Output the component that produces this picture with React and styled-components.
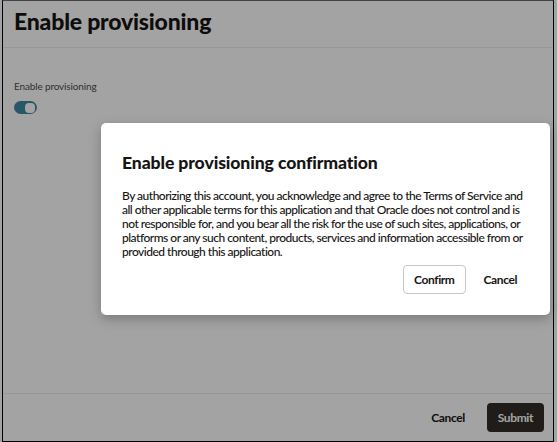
import styled, { createGlobalStyle } from 'styled-components';

const GlobalStyle = createGlobalStyle`
  html, body {
    margin: 0;
    padding: 0;
    background: #ffffff;
  }
  body {
    font-family: Lato, "Noto Sans", sans-serif;
    color: #161513;
  }
`;

const Page = styled.div`
  width: 557px;
  height: 442px;
  position: relative;
  overflow: hidden;
  background: #ffffff;
`;

const Frame = styled.div`
  margin-left: 2px;
  width: 550px;
  height: 440px;
  border: 1px solid #000000;
  border-top-color: #6a6a6a;
  display: flex;
  flex-direction: column;
`;

const Header = styled.header`
  height: 46px;
  border-bottom: 1px solid #ececec;
  padding: 0 11px;
  display: flex;
  align-items: center;
`;

const Title = styled.h1`
  margin: -6px 0 0;
  font-size: 23px;
  font-weight: 900;
  letter-spacing: -0.2px;
  color: #161513;
`;

const Content = styled.main`
  flex: 1;
  padding: 32px 11px 0;
`;

const FieldLabel = styled.label`
  display: block;
  font-size: 10px;
  letter-spacing: -0.15px;
  color: #4f4d4b;
  margin-bottom: 9px;
`;

const Toggle = styled.span`
  display: flex;
  justify-content: flex-end;
  align-items: center;
  width: 23px;
  height: 13px;
  box-sizing: border-box;
  padding: 0 2px;
  border-radius: 7px;
  background: ${(p) => (p.on ? '#3d8aa3' : '#bbbbbb')};
`;

const Knob = styled.span`
  width: 10px;
  height: 10px;
  border-radius: 4px;
  background: #ffffff;
`;

const Footer = styled.footer`
  height: 47px;
  border-top: 1px solid #ececec;
  display: flex;
  justify-content: flex-end;
  align-items: center;
  gap: 10px;
  padding: 0 9px 0 0;
`;

const Button = styled.button`
  font-family: Lato, "Noto Sans", sans-serif;
  font-size: 12px;
  font-weight: 700;
  letter-spacing: -0.4px;
  height: 29px;
  padding: 0 ${(p) => (p.pad ? p.pad : 11)}px;
  border-radius: 4px;
  cursor: pointer;
  border: 1px solid ${(p) => (p.variant === 'outline' ? '#c9c7c5' : 'transparent')};
  background: ${(p) => (p.variant === 'primary' ? '#312d2a' : '#ffffff')};
  color: ${(p) => (p.variant === 'primary' ? '#ffffff' : '#161513')};
`;

const Overlay = styled.div`
  position: absolute;
  inset: 0;
  background: rgba(0, 0, 0, 0.36);
`;

const Dialog = styled.section`
  position: absolute;
  left: 101px;
  top: 123px;
  width: 449px;
  height: 192px;
  box-sizing: border-box;
  background: #ffffff;
  border-radius: 5px;
  box-shadow: 0 4px 12px rgba(0, 0, 0, 0.25);
  padding: 29px 21px 21px 21px;
  display: flex;
  flex-direction: column;
`;

const DialogTitle = styled.h2`
  margin: 0;
  font-size: 17.6px;
  line-height: 22px;
  font-weight: 900;
  letter-spacing: -0.1px;
  color: #161513;
`;

const DialogBody = styled.p`
  margin: 15px 0 0;
  font-size: 12px;
  line-height: 14px;
  font-weight: 500;
  letter-spacing: -0.5px;
  color: #161513;
  width: 405px;
`;

const DialogActions = styled.div`
  margin-top: auto;
  display: flex;
  justify-content: flex-end;
  gap: 6px;
`;

export default function App() {
  return (
    <>
      <GlobalStyle />
      <Page>
        <Frame>
          <Header>
            <Title>Enable provisioning</Title>
          </Header>
          <Content>
            <FieldLabel>Enable provisioning</FieldLabel>
            <Toggle on>
              <Knob />
            </Toggle>
          </Content>
          <Footer>
            <Button>Cancel</Button>
            <Button variant="primary" pad={10}>Submit</Button>
          </Footer>
        </Frame>
        <Overlay />
        <Dialog role="dialog" aria-label="Enable provisioning confirmation">
          <DialogTitle>Enable provisioning confirmation</DialogTitle>
          <DialogBody>
            By authorizing this account, you acknowledge and agree to the Terms of Service and
            all other applicable terms for this application and that Oracle does not control and is
            not responsible for, and you bear all the risk for the use of such sites, applications, or
            platforms or any such content, products, services and information accessible from or
            provided through this application.
          </DialogBody>
          <DialogActions>
            <Button variant="outline" pad={10}>Confirm</Button>
            <Button>Cancel</Button>
          </DialogActions>
        </Dialog>
      </Page>
    </>
  );
}
